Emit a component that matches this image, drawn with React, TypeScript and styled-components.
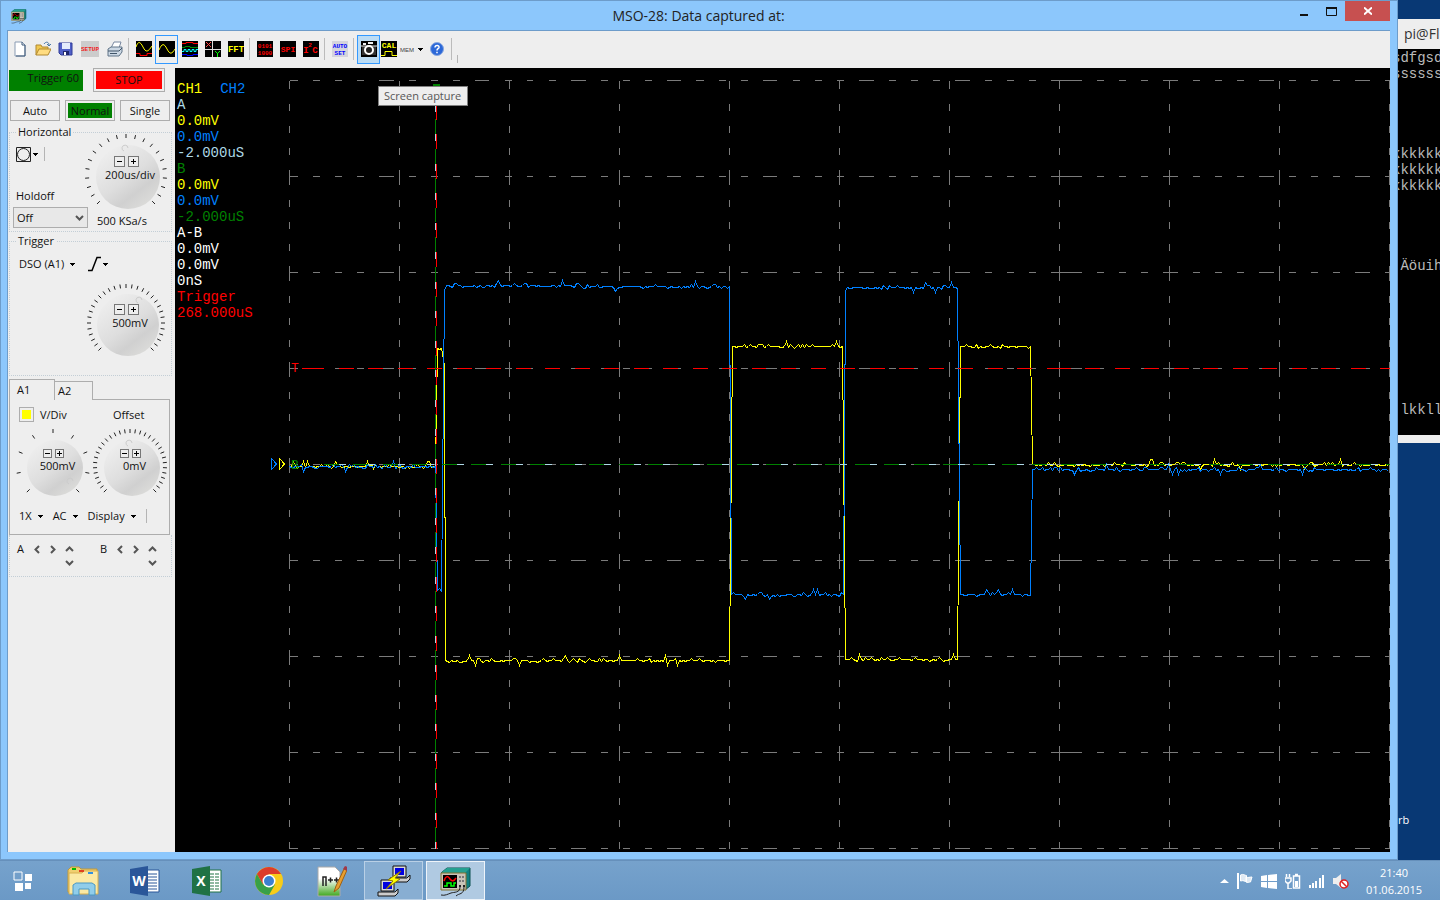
import React, { ReactNode } from "react";
import styled, { createGlobalStyle } from "styled-components";

const ui = `"Open Sans", "Noto Sans", sans-serif`;
const mono = `"Liberation Mono", monospace`;

const Global = createGlobalStyle`
  * { box-sizing: border-box; }
  body { margin: 0; background: #083874; font: 11px/16px ${ui}; color: #111; }
  button, select { font: inherit; color: inherit; margin: 0; padding: 0; border: 0; background: none; }
  svg { display: block; }
`;

/* ---------- desktop ---------- */

const Desktop = styled.div`
  display: flex;
  flex-direction: column;
  min-height: 100vh;
`;
const Workspace = styled.div`
  display: flex;
  flex: 1;
`;
const Behind = styled.aside`
  display: flex;
  flex-direction: column;
  width: 42px;
  overflow: hidden;
  padding-top: 19px;
  background: #083874;
`;
const BehindTitle = styled.div`
  height: 30px;
  padding-left: 6px;
  background: #eeeeee;
  color: #333;
  font-size: 14px;
  line-height: 30px;
  white-space: nowrap;
`;
const Terminal = styled.pre`
  margin: 0;
  height: 394px;
  padding-top: 1px;
  border-bottom: 8px solid #eeeeee;
  background: #000;
  color: #bbb;
  font: 14px/16px ${mono};
`;
const TermLine = styled.div`
  height: 16px;
  margin-left: -6px;
`;
const DesktopLabel = styled.span`
  margin-top: 369px;
  color: #fff;
`;

/* ---------- window ---------- */

const Window = styled.main`
  display: flex;
  flex-direction: column;
  flex: 1;
  min-width: 0;
  padding: 0 7px 7px 6px;
  border: 1px solid #6d9cca;
  background: #8cc7fc;
`;
const TitleBar = styled.header`
  display: grid;
  grid-template-columns: 1fr auto 1fr;
  height: 29px;
`;
const TitleIcon = styled.span`
  padding: 7px 0 0 4px;
`;
const Title = styled.h1`
  margin: 0;
  font-size: 14px;
  font-weight: 400;
  line-height: 29px;
  color: #222;
`;
const WindowButtons = styled.div`
  display: flex;
  justify-content: flex-end;
`;
const WindowButton = styled.button<{ $close?: boolean }>`
  display: grid;
  place-items: center;
  width: ${(p) => (p.$close ? 45 : 27)}px;
  height: 20px;
  background: ${(p) => (p.$close ? "#c75050" : "none")};
`;
const Client = styled.div`
  display: flex;
  flex-direction: column;
  flex: 1;
  border: solid #6d9cca;
  border-width: 1px 0 0 1px;
  background: #eeeeee;
`;

/* ---------- toolbar ---------- */

const Toolbar = styled.div`
  display: flex;
  align-items: center;
  height: 37px;
  padding-bottom: 1px;
`;
const Tool = styled.button<{ $state?: "on" | "hover"; $w?: number }>`
  display: grid;
  grid-auto-flow: column;
  place-content: center;
  align-items: center;
  gap: 3px;
  width: ${(p) => p.$w ?? 23}px;
  height: 29px;
  border: ${(p) => (p.$state ? "1px solid #3399ff" : "0")};
  background: ${(p) => (p.$state === "hover" ? "#bcdcf4" : "none")};
`;
const Divider = styled.span`
  width: 6px;
  height: 22px;
  border-right: 3px solid transparent;
  background: linear-gradient(#bbb, #bbb) right / 1px 100% no-repeat;
`;
const Grip = styled.span`
  width: 1px;
  height: 14px;
  background: #b4b4b4;
`;
const LowGrip = styled(Grip)`
  height: 8px;
  margin: 20px 0 0 2px;
`;

/* ---------- side panel ---------- */

const Body = styled.div`
  display: flex;
  flex: 1;
`;
const Side = styled.aside`
  width: 167px;
  flex: none;
  padding-left: 1px;
`;
const StatusRow = styled.div`
  display: flex;
  gap: 10px;
  height: 24px;
`;
const TriggerState = styled.div`
  width: 74px;
  height: 21px;
  margin-top: 2px;
  padding-right: 4px;
  background: #008000;
  line-height: 15px;
  text-align: right;
`;
const PushButton = styled.button<{ $fill?: string; $w: number }>`
  width: ${(p) => p.$w}px;
  padding: 2px;
  border: 1px solid #adadad;
  background: ${(p) => p.$fill ?? "#eeeeee"} content-box;
`;
const ModeRow = styled.div`
  display: flex;
  gap: 5px;
  height: 21px;
  margin: 8px 0 3px 1px;
`;
const Group = styled.fieldset<{ $h: number }>`
  height: ${(p) => p.$h}px;
  min-width: 0;
  width: 163px;
  margin: 0 0 1px;
  padding: 0 3px;
  border: 1px dotted #c3ced6;
`;
const Legend = styled.legend`
  margin-left: 3px;
  padding: 0 2px;
  height: 16px;
`;
const HorizontalGrid = styled.div`
  display: grid;
  grid-template-columns: 71px 84px;
`;
const Column = styled.div`
  display: flex;
  flex-direction: column;
`;
const KnobColumn = styled(Column)`
  align-items: center;
  margin-top: -7px;
`;
const SampleRate = styled.span`
  margin-top: -4px;
  align-self: flex-start;
  padding-left: 13px;
  white-space: nowrap;
`;
const MenuRow = styled.div<{ $top: number; $left: number; $gap: number }>`
  display: flex;
  align-items: center;
  gap: ${(p) => p.$gap}px;
  height: 16px;
  margin: ${(p) => p.$top}px 0 0 ${(p) => p.$left}px;
`;
const MenuButton = styled.button<{ $tight?: boolean }>`
  display: flex;
  align-items: center;
  gap: ${(p) => (p.$tight ? 2 : 6)}px;
  height: 16px;
  white-space: nowrap;
`;
const HoldoffLabel = styled.label`
  margin: 26px 0 3px 3px;
`;
const SelectBox = styled.div`
  display: grid;
  align-items: center;
  width: 75px;
  height: 21px;
  border: 1px solid #adadad;
  background: #e8e8e8;
  > * { grid-area: 1 / 1; }
  > svg { justify-self: end; margin-right: 3px; pointer-events: none; }
`;
const Select = styled.select`
  appearance: none;
  width: 100%;
  height: 19px;
  padding-left: 3px;
`;
const KnobBox = styled.div`
  display: grid;
  place-items: center;
  > * { grid-area: 1 / 1; }
`;
const KnobFace = styled.div<{ $small?: boolean }>`
  display: grid;
  justify-items: center;
  margin: 0 0 ${(p) => (p.$small ? 10 : 12)}px ${(p) => (p.$small ? 9 : 8)}px;
`;
const StepRow = styled.div`
  display: flex;
  gap: 3px;
  margin-right: 8px;
`;
const Step = styled.button<{ $small?: boolean }>`
  display: grid;
  place-items: center;
  width: ${(p) => (p.$small ? 9 : 11)}px;
  height: ${(p) => (p.$small ? 9 : 11)}px;
  border: 1px solid #777;
  background: #eeeeee;
`;
const TriggerKnobSlot = styled.div`
  display: flex;
  justify-content: flex-end;
  margin: 11px 2px 0 0;
`;
const Tabs = styled.div`
  display: flex;
  align-items: flex-end;
  height: 21px;
  margin-top: 3px;
`;
const Tab = styled.button<{ $active?: boolean }>`
  width: ${(p) => (p.$active ? 46 : 38)}px;
  height: ${(p) => (p.$active ? 21 : 19)}px;
  padding-left: ${(p) => (p.$active ? 7 : 3)}px;
  border: solid #adadad;
  border-width: 1px 1px 0 ${(p) => (p.$active ? 1 : 0)}px;
  text-align: left;
  background: #eeeeee;
  z-index: ${(p) => (p.$active ? 1 : 0)};
`;
const TabPanel = styled.section`
  width: 161px;
  height: 136px;
  margin-top: -1px;
  padding-top: 7px;
  border: 1px solid #adadad;
`;
const ChannelHead = styled.div`
  display: grid;
  grid-template-columns: 15px 67px auto;
  column-gap: 6px;
  height: 16px;
  padding-left: 9px;
`;
const Swatch = styled.button`
  width: 15px;
  height: 15px;
  padding: 2px;
  border: 1px solid #adadad;
  background: #ffff00 content-box;
`;
const KnobPair = styled.div`
  display: flex;
  gap: 1px;
  margin: 5px 0 0 5px;
`;
const CursorPanel = styled.div`
  display: flex;
  gap: 22px;
  width: 163px;
  height: 42px;
  padding: 6px 0 0 7px;
  border: dotted #c3ced6;
  border-width: 0 1px 1px;
`;
const CursorGroup = styled.div`
  display: grid;
  grid-template-columns: 12px 16px 15px 18px;
  grid-template-rows: 16px 10px;
  align-items: center;
  justify-items: center;
  > :first-child { justify-self: start; }
  > :last-child { grid-column: 4; }
`;

/* ---------- scope ---------- */

const Scope = styled.section`
  position: relative;
  display: flex;
  flex: 1;
  min-width: 0;
  background: #000;
`;
const Readout = styled.div`
  flex: none;
  width: 85px;
  padding: 13px 0 0 2px;
  font: 14px/16px ${mono};
`;
const Reading = styled.div<{ $c: string }>`
  color: ${(p) => p.$c};
  white-space: nowrap;
`;
const Channels = styled.div`
  display: flex;
  gap: 18px;
`;
const Plot = styled.svg`
  flex: 1;
  min-width: 0;
  height: auto;
  align-self: flex-start;
`;
const Tooltip = styled.div`
  position: absolute;
  top: 18px;
  left: 203px;
  height: 20px;
  padding: 0 6px 0 5px;
  border: 1px solid #808080;
  background: #eeeeee;
  color: #575757;
  line-height: 18px;
`;

/* ---------- taskbar ---------- */

const Taskbar = styled.footer`
  display: flex;
  height: 40px;
  border-top: 1px solid #6690bb;
  background: linear-gradient(#76a2cc, #6b99c6);
  color: #fff;
`;
const Task = styled.button<{ $run?: "idle" | "front"; $first?: boolean }>`
  display: grid;
  place-items: center;
  width: ${(p) => (p.$first ? 46 : p.$run ? 59 : 56)}px;
  margin: 0 ${(p) => (p.$run ? 1 : 3)}px;
  margin-right: ${(p) => (p.$first ? 6 : p.$run ? 1 : 3)}px;
  margin-left: ${(p) => (p.$first ? 0 : p.$run ? 2 : 3)}px;
  border: ${(p) => (p.$run ? `1px solid ${p.$run === "front" ? "#eef4fa" : "#b9d0e6"}` : "0")};
  background: ${(p) => (p.$run === "front" ? "#b0cae2" : p.$run ? "#88aed2" : "none")};
`;
const Tray = styled.div`
  display: flex;
  align-items: center;
  gap: 8px;
  margin-left: auto;
  padding-right: 18px;
`;
const Clock = styled.time`
  display: grid;
  justify-items: center;
  margin-left: 9px;
  line-height: 17px;
`;

/* ---------- glyphs ---------- */

const Caret = () => (
  <svg width="5" height="3" shapeRendering="crispEdges"><path d="M0 0h5v1H4v1H3v1H2V2H1V1H0z" /></svg>
);

const Chevron = ({ turn }: { turn: number }) => (
  <svg width="9" height="9" viewBox="0 0 9 9" fill="none" stroke="#555" strokeWidth="2">
    <path d="M1 3l3.5 3.5L8 3" transform={`rotate(${turn} 4.5 4.5)`} />
  </svg>
);

const Icon = ({ children, w = 16, h = 16, box = `0 0 ${w} ${h}` }: { children: ReactNode; w?: number; h?: number; box?: string }) => (
  <svg width={w} height={h} viewBox={box} fill="none">{children}</svg>
);

const Dark = ({ children }: { children: ReactNode }) => (
  <Icon><path fill="#000" d="M0 0h16v16H0z" />{children}</Icon>
);

/** One line of lettering centred on a toolbar icon. */
const Letters = ({ y, size, color, mid = 8, children }: { y: number; size: number; color: string; mid?: number; children: string }) => (
  <text x={mid} y={y} textAnchor="middle" fontFamily="Liberation Mono" fontWeight="700" fontSize={size} fill={color}>{children}</text>
);

const Oscilloscope = ({ size }: { size: number }) => (
  <Icon w={size} h={size} box="0 0 32 32">
    <path d="M1 8l6-5h23v18l-5 4" fill="#108080" stroke="#0c5050" />
    <path d="M7 3h23l-5 5H1z" fill="#25a090" />
    <path d="M1 8h25v17H1z" fill="#c8c4b8" stroke="#807030" />
    <path d="M3 10h14v13H3z" fill="#000" />
    <path d="M4 16c2-6 4-5 6-2s4 2 6-1" stroke="#f00" strokeWidth="1.5" />
    <path d="M4 21h3v-3h4v3h3v-3h2" stroke="#0f0" strokeWidth="1.5" />
    <path d="M19 11h2v2h-2zm3 0h2v2h-2zm-3 4h2v2h-2zm3 0h2v2h-2z" fill="#777" />
    <path d="M19 20h2v2h-2zm4 0h2v2h-2z" fill="#222" />
    <path d="M20 22c0 6-6 5-9 6s-6 3-10 2M24 22c0 8-5 6-8 9" stroke="#222" />
  </Icon>
);

/* ---------- knob ---------- */

interface KnobProps { radius: number; disc: number; ticks: number; value: string; small?: boolean; mark: [number, number]; }

function Knob({ radius, disc, ticks, value, small, mark }: KnobProps) {
  const half = radius + 3;
  const id = `face-${radius}-${ticks}`;
  const lines = Array.from({ length: ticks }, (_, i) => {
    const a = ((135 + (270 * i) / (ticks - 1)) * Math.PI) / 180;
    const c = Math.cos(a);
    const s = Math.sin(a);
    return `M${c * (radius - 2)} ${s * (radius - 2)}L${c * (radius + 2)} ${s * (radius + 2)}`;
  }).join("");
  return (
    <KnobBox>
      <svg width={half * 2} height={half * 2} viewBox={`${-half} ${-half} ${half * 2} ${half * 2}`}>
        <defs>
          <linearGradient id={id} x1="0.15" y1="0.1" x2="0.8" y2="0.95">
            <stop offset="0" stopColor="#eeeeee" />
            <stop offset="0.5" stopColor="#dedede" />
            <stop offset="0.75" stopColor="#d0d0d0" />
            <stop offset="1" stopColor="#dcdcda" />
          </linearGradient>
        </defs>
        <circle cx="2" cy="2" r={disc} fill={`url(#${id})`} />
        <path d={lines} stroke="#222" />
        <path d={`M${mark[0]} ${mark[1]}a3 3 0 1 1 4-3`} stroke="#ccc" fill="none" />
      </svg>
      <KnobFace $small={small}>
        <StepRow>
          {["M1 3.5h5", "M1 3.5h5M3.5 1v5"].map((d, i) => (
            <Step key={d} $small={small} aria-label={i ? "Increase" : "Decrease"}>
              <svg width="7" height="7" stroke="#000"><path d={d} /></svg>
            </Step>
          ))}
        </StepRow>
        <span>{value}</span>
      </KnobFace>
    </KnobBox>
  );
}

/* ---------- waveforms ---------- */

type Level = [from: number, to: number, y: number];

/** Flat levels with a little sampling noise, joined by steep edges. */
function trace(levels: Level[], seed: number) {
  let s = seed;
  const rnd = () => ((s = (s * 16807) % 2147483647) / 2147483647);
  const points: string[] = [];
  for (const [from, to, y] of levels) {
    for (let x = from; x <= to; x += 2) {
      const r = rnd();
      const jump = r > 0.98 ? 5 : r > 0.94 ? -5 : r > 0.82 ? -2 : r < 0.1 ? 2 : Math.round(rnd() * 1.4 - 0.4);
      points.push(`${x} ${y + (x === from ? 0 : jump)}`);
    }
  }
  return "M" + points.join("L");
}

const ch2 = trace([[0, 146, 386], [148, 153, 510], [155, 155, 210], [157, 290, 205], [292, 440, 206], [442, 554, 514], [556, 556, 210], [558, 668, 207], [671, 742, 514], [743, 1100, 389]], 71);
const ch1 = trace([[0, 146, 386], [148, 153, 268], [155, 155, 285], [156, 440, 580], [443, 554, 266], [556, 668, 579], [671, 742, 266], [743, 1100, 384]], 1234);

const columns = Array.from({ length: 11 }, (_, i) => i * 110);
const rows = Array.from({ length: 9 }, (_, i) => i * 96);

function Waveforms() {
  return (
    <Plot viewBox="-29 -12 1130 784" fill="none" role="img" aria-label="Captured waveforms">
      <g shapeRendering="crispEdges" transform="translate(.5 .5)">
        <path
          d={columns.map((x) => `M${x} 0V768`).join("") + rows.map((y) => `M0 ${y}H776M776 ${y}H784M784 ${y}H1100`).join("")}
          stroke="#7b7b7b"
          strokeDasharray="8 15 7 15 7 15 7 15 7 0"
        />
        <path d={ch1} stroke="#ffff00" />
        <path d={ch2} stroke="#0080ff" />
        <path d="M34 384H1100" stroke="#008000" strokeDasharray="15 14.5" />
        <path d="M49 384H1100" stroke="#add8e6" strokeDasharray="7 22.5" />
        <path d="M12 288H34" stroke="#ff0000" />
        <path d="M49 288H759M759 288H766M766 288H1100" stroke="#ff0000" strokeDasharray="15 14.5" />
        <path d="M146 9V768" stroke="#008000" strokeDasharray="15 14.5" />
        <path d="M146 24V768" stroke="#add8e6" strokeDasharray="7 22.5" />
        <path d="M147 24V768" stroke="#ff0000" strokeDasharray="15 14.5" />
        <path d="M143 4h7" stroke="#008000" strokeWidth="2" />
        <path d="M-18 378v11l5-5.5z" stroke="#0080ff" />
        <path d="M-10 378v11l5-5.5z" stroke="#ffff00" />
      </g>
      <g fontFamily="Liberation Mono" fontSize="13">
        <text x="2" y="292" fill="#ff0000">T</text>
        <text x="2" y="389" fill="#008000">B</text>
      </g>
    </Plot>
  );
}

const blue = "#0080ff";
const readings: [string, string][] = [
  ["A", "#add8e6"], ["0.0mV", "#ffff00"], ["0.0mV", blue], ["-2.000uS", "#add8e6"],
  ["B", "#008000"], ["0.0mV", "#ffff00"], ["0.0mV", blue], ["-2.000uS", "#008000"],
  ["A-B", "#fff"], ["0.0mV", "#fff"], ["0.0mV", "#fff"], ["0nS", "#fff"],
  ["Trigger", "#ff0000"], ["268.000uS", "#ff0000"],
];

const terminal = ["sdfgsd", "ssssss", "", "", "", "", "kkkkkk", "kkkkkk", "kkkkkk", "", "", "", "", " Äöuih", "", "", "", "", "", "", "", "", " lkkll"];

/* ---------- sections ---------- */

const ToolStrip = () => (
  <Toolbar role="toolbar">
    <Tool aria-label="New"><Icon><path d="M3 1h7l3 3v11H3z" fill="#fff" stroke="#8a9cb4" /><path d="M13 4v11H4" stroke="#3c5878" /><path d="M10 1v3h3" stroke="#3c5878" /></Icon></Tool>
    <Tool aria-label="Open"><Icon><path d="M1 14V4h5l1 2h6v3" fill="#f0c850" stroke="#b08830" /><path d="M1 14L4 8h12l-3 6z" fill="#ffdc80" stroke="#b08830" /><path d="M9 3c2-3 5-2 5 1m-2-1l2 2 2-2" stroke="#4878a8" /></Icon></Tool>
    <Tool aria-label="Save"><Icon><path d="M1 2h13v12H3l-2-2z" fill="#5060c8" stroke="#303c98" /><path d="M4 2h8v6H4z" fill="#e4ecfc" /><path d="M5 10h6v4H5z" fill="#20286c" /><path d="M6 11h2v3H6z" fill="#fff" /></Icon></Tool>
    <Tool $w={26} aria-label="Setup"><Icon w={18}><path fill="#ccc" d="M0 0h18v16H0z" /><Letters mid={9} y={10} size={6} color="#f02020">SETUP</Letters></Icon></Tool>
    <Tool aria-label="Print"><Icon><path d="M4 7l3-6h7l-2 6" fill="#fff" stroke="#7888a0" /><path d="M1 8l3-2h11v5l-3 4H1z" fill="#ccd8e4" stroke="#607488" /><path d="M1 10h11l3-3M3 12.5h7" stroke="#405468" /></Icon></Tool>
    <Divider />
    <Tool aria-label="Mixed signals"><Dark><path d="M0 6C2 0 4 0 7 6s5 5 9-1" stroke="#ff0" /><path d="M0 12.5h4v2h7v-2h5" stroke="#f00" /></Dark></Tool>
    <Tool $state="on" aria-label="Analog"><Dark><path d="M0 9C3 2 5 2 8 8s5 5 8 0" stroke="#ff0" /></Dark></Tool>
    <Tool aria-label="Logic"><Dark><path d="M0 2.5h4v-1h7v1h5" stroke="#f00" /><path d="M0 6.500h3v-1h5v1h8" stroke="#080" /><path d="M0 10.5h2v-2h2v2h2v-2h2v2h2v-2h2v2h2v-2h2" stroke="#0ff" /><path d="M0 13.5h5v1h6v-1h5" stroke="#00f" /></Dark></Tool>
    <Tool aria-label="X Y plot"><Dark><path d="M1 1l5 5m0-5L1 6" stroke="#f44" /><path d="M7.5 0v16M0 8.5h16" stroke="#ddd" /><path d="M10 10l2.5 2.5L15 10M12.5 12v4" stroke="#0f0" /></Dark></Tool>
    <Tool aria-label="FFT"><Dark><Letters y={11} size={9} color="#ff0">FFT</Letters></Dark></Tool>
    <Divider />
    <Tool aria-label="Binary"><Dark><Letters y={7} size={6} color="#f00">0101</Letters><Letters y={14} size={6} color="#f00">1000</Letters></Dark></Tool>
    <Tool aria-label="SPI"><Dark><Letters y={11} size={8} color="#f00">SPI</Letters></Dark></Tool>
    <Tool aria-label="I2C"><Dark><Letters mid={3} y={12} size={9} color="#f00">I</Letters><Letters mid={7} y={6} size={6} color="#f00">2</Letters><Letters mid={12} y={12} size={9} color="#f00">C</Letters></Dark></Tool>
    <Divider />
    <Tool aria-label="Auto set"><Icon><path d="M0 0h16v16H0z" fill="#d4d4dc" /><Letters y={7} size={6} color="#00f">AUTO</Letters><Letters y={14} size={6} color="#00f">SET</Letters></Icon></Tool>
    <Divider />
    <Tool $state="hover" aria-label="Screen capture"><Dark><path d="M1 5h14v9H1z" fill="#333" /><path d="M2 3h3m2-1h5" stroke="#eee" strokeWidth="2" /><path d="M0 5h16" stroke="#ddd" /><circle cx="8" cy="9" r="4" fill="#222" stroke="#fff" strokeWidth="2" /></Dark></Tool>
    <Tool $w={18} aria-label="Calibrate"><Dark><Letters y={7} size={8} color="#ff0">CAL</Letters><path d="M0 14.5h4v-4h7v4h5" stroke="#ff0" /></Dark></Tool>
    <Tool $w={27} aria-label="Memory"><Icon w={15}><text x="0" y="11" fontFamily="Liberation Sans" fontSize="6" fill="#444">MEM</text></Icon><Caret /></Tool>
    <Tool $w={24} aria-label="Help"><Icon><circle cx="8" cy="8" r="6.5" fill="#2c68d8" stroke="#88a8e0" /><path d="M6 6.5c0-3 4.500-2.500 4 0-.3 1.300-2 1.200-2 3M8 10.7v1.600" stroke="#fff" strokeWidth="1.5" /></Icon></Tool>
    <Divider />
    <LowGrip />
  </Toolbar>
);

const SidePanel = () => (
  <Side>
    <StatusRow>
      <TriggerState>Trigger 60</TriggerState>
      <PushButton $w={72} $fill="#ff0000">STOP</PushButton>
    </StatusRow>
    <ModeRow>
      <PushButton $w={50}>Auto</PushButton>
      <PushButton $w={50} $fill="#008000">Normal</PushButton>
      <PushButton $w={50}>Single</PushButton>
    </ModeRow>
    <Group $h={108}>
      <Legend>Horizontal</Legend>
      <HorizontalGrid>
        <Column>
          <MenuRow $top={6} $left={3} $gap={6}>
            <MenuButton $tight aria-label="Display shape">
              <svg width="15" height="15" fill="none" stroke="#222"><path d="M.5.5h14v14H.5z" /><circle cx="7.5" cy="7.5" r="6" /></svg>
              <Caret />
            </MenuButton>
            <Grip />
          </MenuRow>
          <HoldoffLabel htmlFor="holdoff">Holdoff</HoldoffLabel>
          <SelectBox>
            <Select id="holdoff"><option>Off</option></Select>
            <Chevron turn={0} />
          </SelectBox>
        </Column>
        <KnobColumn>
          <Knob radius={39} disc={32} ticks={21} value="200us/div" mark={[-2, -24]} />
          <SampleRate>500 KSa/s</SampleRate>
        </KnobColumn>
      </HorizontalGrid>
    </Group>
    <Group $h={143}>
      <Legend>Trigger</Legend>
      <MenuRow $top={7} $left={6} $gap={12}>
        <MenuButton>DSO (A1) <Caret /></MenuButton>
        <MenuButton $tight aria-label="Trigger slope">
          <svg width="14" height="16" fill="none" stroke="#000" strokeWidth="1.5"><path d="M1 14.5h4l5-13h4" /></svg>
          <Caret />
        </MenuButton>
      </MenuRow>
      <TriggerKnobSlot>
        <Knob radius={37} disc={31} ticks={31} value="500mV" mark={[12, -20]} />
      </TriggerKnobSlot>
    </Group>
    <Tabs role="tablist">
      <Tab role="tab" aria-selected $active>A1</Tab>
      <Tab role="tab">A2</Tab>
    </Tabs>
    <TabPanel>
      <ChannelHead>
        <Swatch aria-label="Channel colour" />
        <span>V/Div</span>
        <span>Offset</span>
      </ChannelHead>
      <KnobPair>
        <Knob radius={35} disc={28} ticks={9} value="500mV" small mark={[16, 18]} />
        <Knob radius={35} disc={28} ticks={33} value="0mV" small mark={[-2, -20]} />
      </KnobPair>
      <MenuRow $top={4} $left={9} $gap={10}>
        <MenuButton>1X <Caret /></MenuButton>
        <MenuButton>AC <Caret /></MenuButton>
        <MenuButton>Display <Caret /></MenuButton>
        <Grip />
      </MenuRow>
    </TabPanel>
    <CursorPanel>
      {["A", "B"].map((name) => (
        <CursorGroup key={name}>
          <span>{name}</span>
          {([["left", 90], ["right", -90], ["up", 180], ["down", 0]] as const).map(([way, turn]) => (
            <button key={way} aria-label={`Move cursor ${name} ${way}`}><Chevron turn={turn} /></button>
          ))}
        </CursorGroup>
      ))}
    </CursorPanel>
  </Side>
);

const OfficeIcon = ({ letter, color }: { letter: string; color: string }) => (
  <Icon w={32} h={32}>
    <path d="M16 5h14v22H16z" fill="#fff" stroke={color} />
    <path d="M19 9h9m-9 3h9m-9 3h9m-9 3h9m-9 3h9m-9 3h9" stroke={color} />
    {letter === "X" && <path d="M23.5 6v20" stroke="#fff" />}
    <path d="M1 4l18-3v30L1 28z" fill={color} />
    <text x="10" y="21" textAnchor="middle" fontFamily="Open Sans" fontWeight="700" fontSize="14" fill="#fff">{letter}</text>
  </Icon>
);

const Computer = ({ x, y }: { x: number; y: number }) => (
  <g transform={`translate(${x} ${y})`}>
    <path d="M3 0h13v11H3z" fill="#d8d8d8" stroke="#111" />
    <path d="M5 2h9v7H5z" fill="#0000e0" />
    <path d="M0 12h17l3-3v4l-3 3H0z" fill="#ccc" stroke="#111" />
  </g>
);

const TaskStrip = () => (
  <Taskbar>
    <Task $first aria-label="Start">
      <Icon w={20} h={20}><path d="M1 1h8v8H1z" stroke="#fff" /><path d="M12 3h7v7h-7zM2 12h8v8H2zM12 12h6v6h-6z" fill="#fff" /></Icon>
    </Task>
    <Task aria-label="File Explorer">
      <Icon w={34} h={32}>
        <path d="M2 5l3-3h8l2 2h16v23H2z" fill="#f0cf70" stroke="#c09838" />
        <path d="M3 8h13l2-2h14v23H3z" fill="#fbe9a4" stroke="#d8b050" />
        <path d="M6 3h4v2H6z" fill="#0b0" /><path d="M13 5h5v2h-5z" fill="#e04020" /><path d="M22 7h5v2h-5z" fill="#3090e0" />
        <path d="M7 30V20l3-2h16l3 2v10h-6v-6H13v6z" fill="#90cdea" stroke="#4a98c4" />
      </Icon>
    </Task>
    <Task aria-label="Word"><OfficeIcon letter="W" color="#2a5699" /></Task>
    <Task aria-label="Excel"><OfficeIcon letter="X" color="#207245" /></Task>
    <Task aria-label="Chrome">
      <Icon w={30} h={30} box="-15 -15 30 30">
        <circle r="14" fill="#f8cc18" />
        <path d="M-12.100-7A14 14 0 0 1 12.100-7H0L-6 3.500z" fill="#dc3c2c" />
        <path d="M-12.100-7A14 14 0 0 0 0 14L6 3.500H-6z" fill="#38a048" />
        <circle r="6.5" fill="#fff" /><circle r="5" fill="#3c80d0" />
      </Icon>
    </Task>
    <Task aria-label="Notepad++">
      <Icon w={32} h={34}>
        <defs><linearGradient id="page" x2="0" y2="1"><stop offset=".4" stopColor="#fff" /><stop offset="1" stopColor="#40a820" /></linearGradient></defs>
        <path d="M3 3h17l5 5v24H3z" fill="url(#page)" stroke="#aaa" />
        <path d="M8 22v-9h3v9M13 16h5m-2.500-2.500v5M19 16h5m-2.500-2.500v5" stroke="#222" strokeWidth="1.5" />
        <path d="M19 28l2-6 8-17 3 1-8 18z" fill="#e8a030" stroke="#a06010" /><path d="M28 5l2-3 3 1-1 4z" fill="#a03848" />
      </Icon>
    </Task>
    <Task $run="idle" aria-label="PuTTY">
      <Icon w={34} h={34}>
        <Computer x={13} y={2} /><Computer x={1} y={16} />
        <path d="M24 7l-13 9 5 1-7 8 14-10-5-1z" fill="#ff0" stroke="#907800" />
      </Icon>
    </Task>
    <Task $run="front" aria-label="MSO-28"><Oscilloscope size={32} /></Task>
    <Tray>
      <Icon w={9} h={6}><path d="M0 5l4.500-4L9 5z" fill="#fff" /></Icon>
      <Icon><path d="M1 0v16" stroke="#fff" strokeWidth="2" /><path d="M3.500 2c3-1.500 4 .5 6 .5v6c-2 0-3-1.500-6-.5zM9 4c2 1 3.500 0 6 0l-1.500 5c-2 0-3 1-4.500 0z" stroke="#fff" fill="#dfe9f3" /></Icon>
      <Icon><path d="M0 3l6-1v6H0zm7-1l9-1v7H7zM0 9h6v6l-6-1zm7 0h9v7l-9-1z" fill="#fff" /></Icon>
      <Icon><path d="M1.500 1v3m3-3v3M0 5h6v3L4 10H2L0 8zM3 10v6h4" stroke="#fff" strokeWidth="1.5" /><path d="M8.500 3h6v12h-6zM10 1.500h3" stroke="#fff" strokeWidth="1.5" /><path d="M10 8h3v6h-3z" fill="#fff" /></Icon>
      <Icon><path d="M0 12h2v3H0zm3-2h2v5H3zm3-2h2v7H6zm4-3h2v10h-2zm3-3h2v13h-2z" fill="#fff" /></Icon>
      <Icon><path d="M0 5h3l5-4v14l-5-4H0z" fill="#eee" /><circle cx="11" cy="11" r="4" fill="#fff" stroke="#e02020" strokeWidth="1.5" /><path d="M8 8l6 6" stroke="#e02020" strokeWidth="1.5" /></Icon>
      <Clock><span>21:40</span><span>01.06.2015</span></Clock>
    </Tray>
  </Taskbar>
);

export default function App() {
  return (
    <Desktop>
      <Global />
      <Workspace>
        <Window>
          <TitleBar>
            <TitleIcon><Oscilloscope size={16} /></TitleIcon>
            <Title>MSO-28: Data captured at:</Title>
            <WindowButtons>
              <WindowButton aria-label="Minimize"><Icon w={9} h={9}><path d="M0 8h8" stroke="#111" strokeWidth="2" /></Icon></WindowButton>
              <WindowButton aria-label="Maximize"><Icon w={11} h={9}><path d="M.5 1h10v7.500H.5z" stroke="#111" /><path d="M0 1h11" stroke="#111" strokeWidth="2" /></Icon></WindowButton>
              <WindowButton $close aria-label="Close"><Icon w={8} h={8}><path d="M0 .5l8 7M8 .5l-8 7" stroke="#fff" strokeWidth="2" /></Icon></WindowButton>
            </WindowButtons>
          </TitleBar>
          <Client>
            <ToolStrip />
            <Body>
              <SidePanel />
              <Scope>
                <Readout>
                  <Channels><Reading $c="#ffff00">CH1</Reading><Reading $c={blue}>CH2</Reading></Channels>
                  {readings.map(([text, color], i) => <Reading key={i} $c={color}>{text}</Reading>)}
                </Readout>
                <Waveforms />
                <Tooltip role="tooltip">Screen capture</Tooltip>
              </Scope>
            </Body>
          </Client>
        </Window>
        <Behind>
          <BehindTitle>pi@Fl</BehindTitle>
          <Terminal>{terminal.map((line, i) => <TermLine key={i}>{line}</TermLine>)}</Terminal>
          <DesktopLabel>rb</DesktopLabel>
        </Behind>
      </Workspace>
      <TaskStrip />
    </Desktop>
  );
}
